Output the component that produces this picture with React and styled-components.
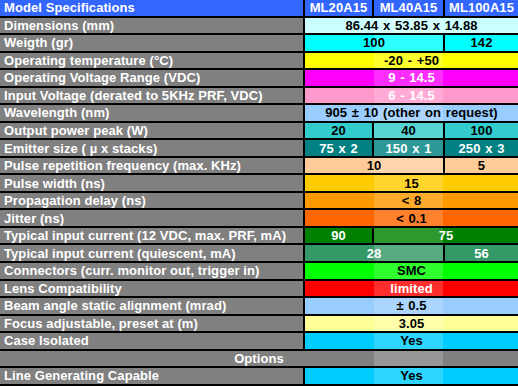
import React from 'react';
import styled, { createGlobalStyle, css } from 'styled-components';

const GlobalStyle = createGlobalStyle`
  html, body {
    margin: 0;
    padding: 0;
    background: #000;
  }
  body {
    font-family: 'Liberation Sans', Arial, sans-serif;
  }
`;

// 303px label column + three model columns, 2px black rules between everything
const Table = styled.div`
  width: 518px;
  display: grid;
  grid-template-columns: 303px 67px 69px 73px;
  grid-auto-rows: 15.545px;
  gap: 2px;
  padding-bottom: 2px;
  background: #000;
  font-size: 13px;
  font-weight: bold;
  letter-spacing: 0.08px;
`;

const Cell = styled.div`
  position: relative;
  display: flex;
  align-items: center;
  justify-content: center;
  overflow: hidden;
  white-space: nowrap;
  line-height: 1;
  background: ${(p) => p.$bg};
  color: ${(p) => p.$fg || '#000'};
  grid-column: ${(p) => p.$col} / span ${(p) => p.$span || 1};

  ${(p) =>
    p.$hl != null &&
    css`
      &::after {
        content: '';
        position: absolute;
        top: 0;
        bottom: 0;
        left: ${p.$hl}px;
        width: 69px;
        background: rgba(255, 255, 255, 0.18);
      }
    `}
`;

const Label = styled(Cell)`
  justify-content: ${(p) => (p.$center ? 'center' : 'flex-start')};
  padding-left: ${(p) => (p.$center ? 0 : 4)}px;
  background: ${(p) => p.$bg || '#808080'};
  color: #fff;
`;

const HeadCell = styled(Cell)`
  background: #3366ff;
  color: #fff;
`;

const Text = styled.span`
  position: relative;
  z-index: 1;
  word-spacing: 1px;
`;

const rows = [
  { label: 'Dimensions (mm)', bg: '#ccffff', cells: [['86.44 x 53.85 x 14.88', 3]] },
  { label: 'Weigth (gr)', bg: '#00ffff', cells: [['100', 2], ['142', 1]] },
  { label: 'Operating temperature (°C)', bg: '#ffff00', cells: [['-20 - +50', 3]] },
  { label: 'Operating Voltage Range (VDC)', bg: '#ff00ff', fg: '#fff', cells: [['9 - 14.5', 3]] },
  { label: 'Input Voltage (derated to 5KHz PRF, VDC)', bg: '#ff99cc', fg: '#fff', cells: [['6 - 14.5', 3]] },
  { label: 'Wavelength (nm)', bg: '#99ccff', cells: [['905 ± 10 (other on request)', 3]] },
  { label: 'Output power peak (W)', bg: '#33cccc', cells: [['20', 1], ['40', 1], ['100', 1]] },
  { label: 'Emitter size ( µ x stacks)', bg: '#008080', fg: '#fff', cells: [['75 x 2', 1], ['150 x 1', 1], ['250 x 3', 1]] },
  { label: 'Pulse repetition frequency (max. KHz)', bg: '#ffcc99', cells: [['10', 2], ['5', 1]] },
  { label: 'Pulse width (ns)', bg: '#ffcc00', cells: [['15', 3]] },
  { label: 'Propagation delay (ns)', bg: '#ff9900', cells: [['< 8', 3]] },
  { label: 'Jitter (ns)', bg: '#ff6600', cells: [['< 0.1', 3]] },
  { label: 'Typical input current (12 VDC, max. PRF, mA)', bg: '#008000', fg: '#fff', cells: [['90', 1], ['75', 2]] },
  { label: 'Typical input current (quiescent, mA)', bg: '#339966', fg: '#fff', cells: [['28', 2], ['56', 1]] },
  { label: 'Connectors (curr. monitor out, trigger in)', bg: '#00ff00', cells: [['SMC', 3]] },
  { label: 'Lens Compatibility', bg: '#ff0000', fg: '#fff', cells: [['limited', 3]] },
  { label: 'Beam angle static alignment (mrad)', bg: '#99ccff', cells: [['± 0.5', 3]] },
  { label: 'Focus adjustable, preset at (m)', bg: '#ffff99', cells: [['3.05', 3]] },
  { label: 'Case Isolated', bg: '#00ccff', cells: [['Yes', 3]] },
  { section: 'Options' },
  { label: 'Line Generating Capable', bg: '#00ccff', cells: [['Yes', 3]] },
];

// offset of the highlighted ML40A15 column inside a cell starting at grid column `col`
const highlightOffset = (col, span) => {
  if (col === 2 && span >= 2) return 69;
  if (col === 3) return 0;
  return null;
};

const SpecRow = ({ row, index }) => {
  if (row.section) {
    return (
      <Label $col={1} $span={4} $center $hl={374}>
        <Text>{row.section}</Text>
      </Label>
    );
  }
  let col = 2;
  return (
    <>
      <Label $col={1}>{row.label}</Label>
      {row.cells.map(([text, span], i) => {
        const start = col;
        col += span;
        return (
          <Cell
            key={`${index}-${i}`}
            $col={start}
            $span={span}
            $bg={row.bg}
            $fg={row.fg}
            $hl={highlightOffset(start, span)}
          >
            <Text>{text}</Text>
          </Cell>
        );
      })}
    </>
  );
};

export default function App() {
  return (
    <>
      <GlobalStyle />
      <Table>
        <Label $col={1} $bg="#3366ff">Model Specifications</Label>
        <HeadCell $col={2}>ML20A15</HeadCell>
        <HeadCell $col={3}>ML40A15</HeadCell>
        <HeadCell $col={4}>ML100A15</HeadCell>
        {rows.map((row, i) => (
          <SpecRow key={i} row={row} index={i} />
        ))}
      </Table>
    </>
  );
}
